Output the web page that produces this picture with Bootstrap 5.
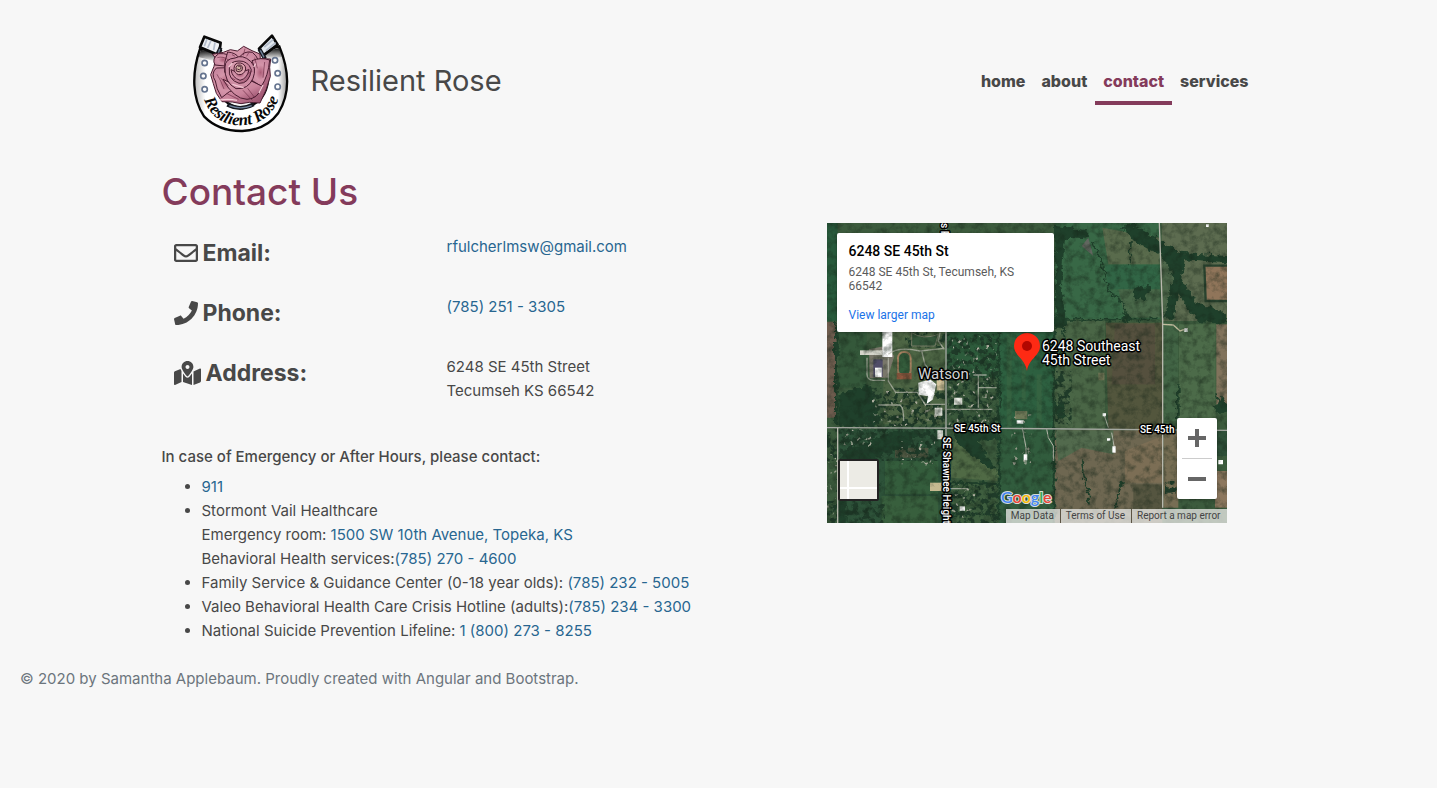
<!DOCTYPE html>
<html lang="en">
<head>
<meta charset="utf-8">
<meta name="viewport" content="width=device-width, initial-scale=1">
<title>Resilient Rose - Contact Us</title>
<link href="https://cdn.jsdelivr.net/npm/bootstrap@5.3.0/dist/css/bootstrap.min.css" rel="stylesheet">
<style>
  :root { --rose: #843b5b; --ink: #484848; --sea: #286690; }
  body { background: #f7f7f7; color: var(--ink); font-family: Inter, "Liberation Sans", sans-serif; font-size: 15px; line-height: 24px; }
  a { color: var(--sea); text-decoration: none; }
  a:hover { text-decoration: underline; }
  .page-width { max-width: 1140px; }
  .site-header { padding: 33px 32px 35px 44px; }
  .site-logo { width: 96px; height: 100px; }
  .site-name { font-size: 29px; line-height: 36px; color: var(--ink); margin-left: 22px; padding: 0 0 4px; }
  .site-nav .nav-link { color: var(--ink); font-size: 16px; font-weight: 800; padding: 8px; border-bottom: 4px solid transparent; }
  .site-nav .nav-link.active { color: var(--rose); border-color: var(--rose); }
  .site-main { padding: 0 13px; }
  .page-title { color: var(--rose); font-size: 37px; line-height: 48px; margin-bottom: 7px; }
  .details { flex: 0 1 665px; min-width: 0; }
  .contact-line { min-height: 60px; padding: 12px 12px 0; margin: 0; }
  .contact-label { flex: 0 0 273px; font-size: 23px; font-weight: 700; line-height: 28px; padding-top: 4px; margin: 0; gap: 5px; }
  .contact-label svg { height: 24px; fill: currentColor; display: block; }
  .emergency-title { font-size: 15px; line-height: 20px; font-weight: 500; margin: 20px 0 8px; }
  .emergency-list { padding-left: 40px; margin-bottom: 16px; }
  .site-footer { padding: 8px 20px; color: #6c757d; }

  .map-box { width: 100%; max-width: 400px; height: 300px; font-family: Roboto, "Liberation Sans", sans-serif; background: #3a5a3a; }
  .map-image { width: 400px; height: 300px; display: block; }
  .map-card { top: 10px; left: 10px; width: 217px; height: 99px; padding: 9px 12px; background: #fff; border-radius: 2px; font-size: 12px; line-height: 14px; color: #5b5b5b; box-shadow: 0 1px 3px rgba(0,0,0,.3); }
  .map-card-title { font-size: 14px; line-height: 18px; font-weight: 500; color: #000; margin-bottom: 5px; }
  .map-card a { color: #1a73e8; margin-top: 15px; }
  .map-type { left: 11px; bottom: 22px; width: 41px; height: 42px; border: 2px solid #222; border-radius: 2px; background: #ecebe5; }
  .map-zoom { right: 10px; bottom: 24px; width: 40px; background: #fff; border-radius: 2px; box-shadow: 0 1px 3px rgba(0,0,0,.3); }
  .map-zoom button { width: 40px; height: 40px; border: 0; background: none; }
  .map-zoom hr { margin: 0 5px; border-color: #ccc; opacity: 1; }
  .map-legal { right: 0; bottom: 0; font-size: 10px; line-height: 14px; }
  .map-legal a { color: #444; background: rgba(235,235,232,.76); padding: 0 6px 0 5px; }
  .map-legal a + a { border-left: 1px solid #5b5344; }
  .street { font-size: 10px; font-weight: 500; }
  .map-text { fill: #fff; stroke: #000; stroke-width: 3px; stroke-linejoin: round; paint-order: stroke; }
</style>
</head>
<body>
<header class="site-header page-width mx-auto d-flex flex-wrap align-items-center justify-content-between">
  <a class="d-flex align-items-center text-decoration-none" href="#">
    <svg class="site-logo" viewBox="36 24 288 300" role="img" aria-label="Resilient Rose logo">
      <defs>
        <radialGradient id="petal"><stop offset="0" stop-color="#ab5c77"/><stop offset=".55" stop-color="#d595aa"/><stop offset="1" stop-color="#ca88a0"/></radialGradient>
        <linearGradient id="petal2" x1="0" y1="0" x2="1" y2="1"><stop offset="0" stop-color="#dfa6b6"/><stop offset=".6" stop-color="#c9839b"/><stop offset="1" stop-color="#8d4360"/></linearGradient>
        <linearGradient id="metal"><stop offset="0" stop-color="#bbb"/><stop offset=".12" stop-color="#fff"/><stop offset=".9" stop-color="#fff"/><stop offset="1" stop-color="#999"/></linearGradient>
        <linearGradient id="shade" x1="0" y1="0" x2="0" y2="1"><stop offset="0" stop-color="#111"/><stop offset="1" stop-color="#111" stop-opacity="0"/></linearGradient>
        <path id="logoArc" d="M70 224Q98 304 185 301Q272 296 299 204"/>
      </defs>
      <path d="M57 72C31 147 34 222 69 274Q113 319 184 318Q255 315 292 264C329 204 326 139 295 64L239 80Q260 105 262 155Q259 235 184 250Q113 240 101 164Q99 119 119 78Z" fill="url(#metal)" stroke="#050505" stroke-width="7"/>
      <path d="M60 75L117 84L106 110L52 96Z" fill="url(#shade)"/><path d="M242 82L294 69L307 95L255 104Z" fill="url(#shade)"/>
      <path d="M70 35L119 53L114 91L57 67Z" fill="#edf0f4" stroke="#080808" stroke-width="8" stroke-linejoin="round"/>
      <path d="M234 71L273 32L290 59L246 92Z" fill="#e2e8ee" stroke="#080808" stroke-width="8" stroke-linejoin="round"/>
      <path d="M78 42L70 64M90 47L80 69M102 52L98 75M250 66L277 43M255 77L284 53" stroke="#b3bccb" stroke-width="5"/>
      <path d="M119 68L106 94L120 103M235 72L252 101M139 239Q178 259 218 238" fill="none" stroke="#14181f" stroke-width="12"/>
      <path d="M116 72L109 97M238 76L249 97M145 242Q180 255 212 242" fill="none" stroke="#71839c" stroke-width="4"/>
      <g fill="#fff" stroke="#65748f" stroke-width="5"><circle cx="71" cy="114" r="8"/><circle cx="67" cy="153" r="8"/><circle cx="71" cy="193" r="8"/><circle cx="282" cy="106" r="8"/><circle cx="290" cy="145" r="8"/><circle cx="290" cy="185" r="8"/></g>
      <g stroke="#4a1c30" stroke-width="3" stroke-linejoin="round">
        <path d="M104 99L94 88L127 82L148 74L169 78L188 64L213 77L237 87L238 101L269 102L266 127L268 154L255 195L237 234L205 232L180 236L154 231L123 230L106 205L97 176L89 149L99 124Z" fill="url(#petal2)"/>
        <path d="M106 129L145 128L139 165L173 191L145 200L122 218Q105 190 103 168Q88 146 106 129Z" fill="url(#petal)"/>
        <path d="M113 86Q146 83 155 104L132 123L102 120Q91 101 113 86Z" fill="url(#petal)"/>
        <path d="M140 81Q165 83 174 99Q188 76 214 82Q238 100 237 139L215 157L131 142Q127 113 140 81Z" fill="url(#petal)"/>
        <path d="M213 107Q239 96 266 105Q262 153 241 184L211 165Q227 136 213 107Z" fill="url(#petal)"/>
        <path d="M126 163Q159 185 213 169L244 184Q231 222 198 223Q158 222 126 163Z" fill="url(#petal2)"/>
        <path d="M132 126Q132 101 162 99Q185 87 209 109Q228 129 216 160Q202 194 165 191Q129 172 132 126Z" fill="url(#petal)"/>
        <path d="M145 132Q145 108 174 108Q201 107 211 134Q205 177 174 175Q141 164 145 132Z" fill="url(#petal2)"/>
        <path d="M150 134Q169 146 204 134Q199 161 177 166Q153 158 150 134Z" fill="url(#petal)"/>
        <path d="M159 130Q160 112 178 114Q194 117 194 132Q190 150 173 149Q159 145 159 130Z" fill="#dda4af"/>
        <path d="M165 127Q167 118 179 120Q188 125 183 136Q175 144 166 138Z" fill="#d0b0a1"/>
        <path d="M172 125Q180 121 180 130Q176 138 169 132" fill="none"/>
      </g>
      <path d="M109 98Q126 92 144 106M108 148Q120 167 129 192M118 158L142 182M153 89L162 94M221 98L229 130M251 111L246 158M186 196L214 226M200 190L222 219M136 205L173 223M192 71L187 91M205 80L197 94M151 158L163 165M198 147L214 139" fill="none" stroke="#6c2c45" stroke-width="2"/>
      <path d="M116 225Q143 221 168 226M224 116L218 126M154 114L143 126M154 178L188 188M234 204L246 180" stroke="#f2c8d3" stroke-width="4" fill="none"/>
      <text font-family="Liberation Serif, serif" font-style="italic" font-weight="700" font-size="50" fill="#080808"><textPath href="#logoArc">Resilient Rose</textPath></text>
    </svg>
    <span class="site-name">Resilient Rose</span>
  </a>
  <nav class="site-nav nav" aria-label="Main">
    <a class="nav-link" href="#">home</a>
    <a class="nav-link" href="#">about</a>
    <a class="nav-link active" aria-current="page" href="#">contact</a>
    <a class="nav-link" href="#">services</a>
  </nav>
</header>

<main class="site-main page-width mx-auto">
  <h1 class="page-title">Contact Us</h1>
  <div class="d-lg-flex">
    <section class="details">
      <div class="contact-line d-flex flex-wrap align-items-start">
        <h2 class="contact-label d-flex align-items-center">
          <svg viewBox="0 0 512 512" aria-hidden="true"><path d="M464 64H48C21.5 64 0 85.500 0 112v288c0 26.500 21.500 48 48 48h416c26.500 0 48-21.500 48-48V112c0-26.500-21.500-48-48-48zm0 48v40.800c-22.400 18.300-58.200 46.700-134.600 106.500-16.800 13.200-50.200 45.100-73.400 44.700-23.200.4-56.600-31.500-73.400-44.700C106.200 199.500 70.400 171.100 48 152.800V112h416zM48 400V214.400c22.900 18.300 55.400 43.900 104.900 82.600 21.900 17.200 60.100 55.200 103.100 55 42.700.2 80.500-37.200 103.100-54.900 49.500-38.800 82-64.400 104.900-82.700V400H48z"/></svg>
          Email:</h2>
        <a href="mailto:rfulcherlmsw@gmail.com">rfulcherlmsw@gmail.com</a>
      </div>
      <div class="contact-line d-flex flex-wrap align-items-start">
        <h2 class="contact-label d-flex align-items-center">
          <svg viewBox="0 0 512 512" aria-hidden="true"><path d="M493.400 24.600l-104-24c-11.300-2.600-22.900 3.300-27.500 13.900l-48 112c-4.200 9.800-1.400 21.300 6.900 28l60.600 49.600c-36 76.700-98.900 140.500-177.200 177.200l-49.600-60.600c-6.800-8.300-18.200-11.100-28-6.900l-112 48C3.900 366.500-2 378.100.6 389.400l24 104C27.100 504.200 36.700 512 48 512c256.100 0 464-207.500 464-464 0-11.200-7.700-20.900-18.600-23.400z"/></svg>
          Phone:</h2>
        <a href="tel:7852513305">(785) 251 - 3305</a>
      </div>
      <div class="contact-line d-flex flex-wrap align-items-start">
        <h2 class="contact-label d-flex align-items-center">
          <svg viewBox="0 0 576 512" aria-hidden="true"><path d="M288 0c-69.600 0-126 56.400-126 126 0 56.300 82.400 158.800 113.900 196.300 6.400 7.600 17.700 7.600 24.100 0C331.600 284.800 414 182.300 414 126 414 56.400 357.600 0 288 0zm0 168c-23.200 0-42-18.800-42-42s18.800-42 42-42 42 18.800 42 42-18.800 42-42 42zM20.100 216C8 220.800 0 232.500 0 245.600V496c0 11.300 11.400 19 21.900 14.900L160 448V214.900c-8.800-16-16.100-31.500-21.300-46.400L20.100 216zM288 359.700c-14.100 0-27.400-6.200-36.500-17-19.700-23.300-40.600-49.600-59.500-76.700V448l192 64V266c-18.900 27.100-39.800 53.400-59.500 76.700-9.100 10.800-22.400 17-36.500 17zm266.100-198.600L416 224v288l139.900-56c12.100-4.800 20.100-16.500 20.100-29.600V176c0-11.300-11.400-19-21.900-14.900z"/></svg>
          Address:</h2>
        <address class="mb-4">6248 SE 45th Street<br>Tecumseh KS 66542</address>
      </div>
      <h2 class="emergency-title">In case of Emergency or After Hours, please contact:</h2>
      <ul class="emergency-list">
        <li><a href="tel:911">911</a></li>
        <li>Stormont Vail Healthcare<br>Emergency room: <a href="#">1500 SW 10th Avenue, Topeka, KS</a><br>Behavioral Health services:<a href="tel:7852704600">(785) 270 - 4600</a></li>
        <li>Family Service &amp; Guidance Center (0-18 year olds): <a href="tel:7852325005">(785) 232 - 5005</a></li>
        <li>Valeo Behavioral Health Care Crisis Hotline (adults):<a href="tel:7852343300">(785) 234 - 3300</a></li>
        <li>National Suicide Prevention Lifeline: <a href="tel:18002738255">1 (800) 273 - 8255</a></li>
      </ul>
    </section>

    <section class="map-box position-relative overflow-hidden flex-shrink-0" aria-label="Map">
      <svg class="map-image" viewBox="0 0 400 300" role="img" aria-label="Satellite map of 6248 SE 45th Street">
        <defs>
          <filter id="rough" x="-5%" y="-5%" width="110%" height="110%" color-interpolation-filters="sRGB"><feTurbulence type="fractalNoise" baseFrequency=".06" numOctaves="3" seed="4"/><feDisplacementMap in="SourceGraphic" scale="24" xChannelSelector="R" yChannelSelector="G"/></filter>
          <filter id="grain" x="0" y="0" width="100%" height="100%" color-interpolation-filters="sRGB"><feTurbulence type="fractalNoise" baseFrequency=".043" numOctaves="5" seed="8"/><feColorMatrix values="0 0 0 0 .08  0 0 0 0 .14  0 0 0 0 .09  1.100 0 0 0 -.45"/></filter>
          <filter id="specks" x="0" y="0" width="100%" height="100%" color-interpolation-filters="sRGB"><feTurbulence type="fractalNoise" baseFrequency=".06" numOctaves="3" seed="21"/><feColorMatrix values="0 0 0 0 .12  0 0 0 0 .23  0 0 0 0 .16  7 0 0 0 -3.300"/><feComposite in2="SourceGraphic" operator="in"/></filter>
          <filter id="roofs" x="0" y="0" width="100%" height="100%" color-interpolation-filters="sRGB"><feTurbulence type="fractalNoise" baseFrequency=".071" numOctaves="2" seed="33"/><feColorMatrix values="0 0 0 0 .68  0 0 0 0 .68  0 0 0 0 .62  0 9 0 0 -5.900"/><feComposite in2="SourceGraphic" operator="in"/></filter>
        </defs>
        <g transform="scale(.33333) translate(-6 -6)">
          <path fill="#3c5b3d" d="M6 6H1206V906H6z"/>
          <!-- fields -->
          <path fill="#285a3c" d="M6 6H38V300H6z"/><path fill="#6e5c4e" d="M6 303H34V590H6z"/><path fill="#34583a" d="M40 333H125V500H40z"/>
          <path fill="#4d6544" d="M175 333H360V610H175z"/><path fill="#2d5b3b" d="M365 333H520V470H365z"/>
          <path fill="#2d6040" d="M523 333H686V620H523z"/><path fill="#315c3d" d="M523 622H686V906H523z"/>
          <path fill="#386846" d="M690 6H1004V295H690z"/><path fill="#596b4c" d="M832 20L1004 50V130H850Z"/><path fill="#316545" d="M840 132H1004V205H850z"/><path fill="#496849" d="M880 205H1004V290H900z"/>
          <path fill="#5d6c50" d="M1010 6H1206V300H1010z"/><path fill="#4d674a" d="M1012 110L1050 160V295H1012z"/>
          <path fill="#90755a" stroke="#29432f" stroke-width="7" d="M1138 134H1210V240H1142z"/>
          <path fill="#4a6646" d="M690 300H840V625H690z"/><path fill="#53563d" d="M842 305H1012V625H850z"/><path fill="#574e3e" d="M870 310H990V490H860z" opacity=".7"/>
          <path fill="#426545" d="M1014 305H1060V600H1014z"/><path fill="#4c6b49" d="M1062 310H1172V600H1062z"/><path fill="#81735c" d="M1174 310H1206V550H1174z"/>
          <path fill="#6e6751" d="M690 628H1012V906H690z"/><path fill="#526a4d" d="M690 628H865V700L770 680L700 720Z"/><path fill="#7c6e55" d="M900 690L1012 645V785H900z"/><path fill="#555540" d="M925 790H1012V865H925z"/><path fill="#776e54" d="M1015 628H1060V860H1015z"/><path fill="#2f5139" d="M1165 630H1206V705H1165z"/><path fill="#8c775e" d="M1170 750H1206V860H1170z"/>
          <path fill="#2d5239" d="M40 625H360V906H40z"/><path fill="#345d3c" d="M180 720H340V820H180z"/><path fill="#385f3d" d="M170 825H340V906H170z"/>
          <path fill="#506a45" d="M390 650L520 750V780L375 770Z"/><path fill="#3e5e3e" d="M375 785H518V906H375z"/>
          <path fill="#635846" d="M210 680H310V710H210z" opacity=".6"/><path fill="#3b6543" opacity=".6" d="M545 340H560V620H545zM590 340H602V540H590zM635 460H650V615H635z"/>
          <!-- woods and hedgerows -->
          <g filter="url(#rough)" fill="#1f402b" stroke="#1f402b" stroke-linejoin="round">
            <path stroke="none" d="M40 520L135 490L165 600L140 617H40zM40 770L60 690L135 660L210 630L285 632L240 680L170 700L130 730L65 790L40 840zM390 630H518V655L455 660L515 745L495 745L390 660z"/>
            <path stroke="none" d="M920 6L965 35L1010 60L1065 95L1206 105V127L1080 118L1068 170L1110 240L1170 265L1206 280V305L1115 300L1060 220L1045 290L1015 290L1045 170L1005 100L940 70L890 20z"/>
            <path stroke="none" d="M690 15L790 25L780 55L720 50L708 190L725 320L695 320z"/>
            <path fill="none" stroke-width="8" d="M522 335V900M687 330V905M34 300V610M365 785L520 790M1060 490V590"/>
            <path fill="none" stroke-width="5" d="M690 297L1004 295M800 60L830 125L850 210L890 240L906 295M918 60L915 130M700 300L725 360L690 440M375 880H520M40 790L170 788M1175 520L1195 570M770 720L795 850M890 790L870 860"/>
            <circle cx="1190" cy="555" r="20"/><circle cx="906" cy="293" r="10"/><circle cx="890" cy="790" r="8"/>
            <path stroke="none" d="M925 200L975 195L965 230L930 240zM690 560L715 540L725 590L700 600zM40 740H65V906H40z"/>
          </g>
          <path fill="#61665f" d="M770 75L790 50L805 105z"/>
          <g filter="url(#specks)"><path d="M365 340H520V620H365zM120 500H360V620H120zM6 620H360V720H6zM6 840H180V906H6zM240 333H360V380H240zM1020 780H1060V820H1020zM690 450H740V610H690zM375 785H520V906H375zM200 630H350V720H200z"/></g>
          <g filter="url(#roofs)"><path d="M370 345H515V615H370zM130 510H340V615H130zM50 625H150V680H50zM220 660H330V740H220zM380 790H450V890H380zM6 700H40V900H6zM560 580H620V740H560z"/></g>
          <!-- school grounds -->
          <path fill="#79776a" d="M132 385L180 375L208 405L188 470L134 472z"/><path fill="#fff" d="M172 333H202V408H172z"/><path fill="#d5d5cb" d="M105 388H172V402H105z"/><path fill="#504d68" d="M145 415H173V468H145z"/><path fill="#fff" d="M150 440H170V468H150z"/>
          <rect x="219" y="393" width="38" height="73" rx="18" fill="#345d3c" stroke="#a78261" stroke-width="6"/>
          <path fill="#8e573e" d="M215 456H260V475H215z"/><path fill="#d3c39b" d="M335 475H358V508H335z"/>
          <path fill="#fff" d="M280 485L315 475L334 490L324 535L305 549L309 526L281 521z"/><path fill="#edeee7" d="M387 530H412V551H387zM329 560H352V584H329zM337 628H354V655H337z"/>
          <path fill="#c6b990" d="M315 785H350V810H315z"/><path fill="#34563a" stroke="#777d67" stroke-width="3" d="M260 335Q295 358 340 340L330 375H260z"/>
          <g fill="none" stroke="#b8b9ad" stroke-width="4">
            <path d="M126 410V460Q126 478 145 478H180M190 410V480L212 514H277L300 550H360M190 400Q220 375 285 390L358 382M290 390L300 430L335 475M345 335L340 360L358 385M160 552H225Q236 558 236 600M365 565H502M445 462H485M460 462V560M460 500H515M375 803H430" opacity=".75"/>
            <path d="M592 620L603 680V730M665 624L670 650L685 675V720M837 580L850 620M860 635L868 680" stroke-width="3"/>
            <path d="M1014 310L1045 312L1065 330L1088 322" stroke="#c2bd9e"/>
          </g>
          <path fill="#fff" d="M575 598H595V608H575zM596 700H607V718H596zM862 676H872V695H862zM833 577H843V586H833zM846 652H856V659H846zM404 856H420V869H404zM1180 717H1194V730H1180zM1078 322H1088V333H1078zM1143 10H1151V18H1143z"/>
          <path fill="#8b8562" d="M820 455H838V478H820zM570 570H607V595H570z" opacity=".7"/>
          <path fill="#000" filter="url(#grain)" d="M6 6H1206V906H6z"/>
          <path fill="none" stroke="#a5a8a2" stroke-width="4" d="M6 620L525 622L1206 628M363 6V906"/>
          <path fill="none" stroke="#b9b9ae" stroke-width="4" d="M1003 6L1013 300V860M38 620V906"/>
        </g>
        <path d="M200 148C198 135 187 133 187 123A13 13 0 0 1 213 123C213 133 202 135 200 148z" fill="#fe2a14"/>
        <circle cx="200" cy="123" r="5" fill="#b20700"/>
        <g class="map-text" style="font-family:Roboto,sans-serif">
          <text class="street" x="127" y="209">SE 45th St</text>
          <text class="street" x="313" y="210">SE 45th</text>
          <text class="street" transform="translate(116 214) rotate(90)">SE Shawnee Height</text>
          <text class="street" transform="translate(114 0) rotate(90)">s R</text>
          <text x="91" y="156" font-size="15" style="fill:#d4d4d4">Watson</text>
          <text x="215" y="128" font-size="14">6248 Southeast</text>
          <text x="215" y="142" font-size="14">45th Street</text>
        </g>
        <text x="174" y="280" style="font:600 16px Lato,sans-serif;paint-order:stroke;stroke:#d7ddd8;stroke-width:2px"><tspan fill="#4285f4">G</tspan><tspan fill="#ea4335">o</tspan><tspan fill="#fbbc05">o</tspan><tspan fill="#4285f4">g</tspan><tspan fill="#34a853">l</tspan><tspan fill="#ea4335">e</tspan></text>
      </svg>
      <div class="map-card position-absolute">
        <div class="map-card-title">6248 SE 45th St</div>
        <div>6248 SE 45th St, Tecumseh, KS 66542</div>
        <a class="d-inline-block" href="#">View larger map</a>
      </div>
      <button class="map-type position-absolute p-0" type="button" aria-label="Show street map"><svg class="d-block" width="37" height="38" aria-hidden="true"><path d="M8 0V38M0 27H37" stroke="#fff" stroke-width="2"/></svg></button>
      <div class="map-zoom position-absolute">
        <button class="d-flex align-items-center justify-content-center p-0" type="button" aria-label="Zoom in"><svg width="18" height="18" aria-hidden="true"><path d="M9 0V18M0 9H18" stroke="#666" stroke-width="4"/></svg></button>
        <hr>
        <button class="d-flex align-items-center justify-content-center p-0" type="button" aria-label="Zoom out"><svg width="18" height="18" aria-hidden="true"><path d="M0 9H18" stroke="#666" stroke-width="4"/></svg></button>
      </div>
      <div class="map-legal position-absolute d-flex"><a href="#">Map Data</a><a href="#">Terms of Use</a><a href="#">Report a map error</a></div>
    </section>
  </div>
</main>
<footer class="site-footer">© 2020 by Samantha Applebaum. Proudly created with Angular and Bootstrap.</footer>
<script src="https://cdn.jsdelivr.net/npm/bootstrap@5.3.0/dist/js/bootstrap.bundle.min.js"></script>
</body>
</html>
